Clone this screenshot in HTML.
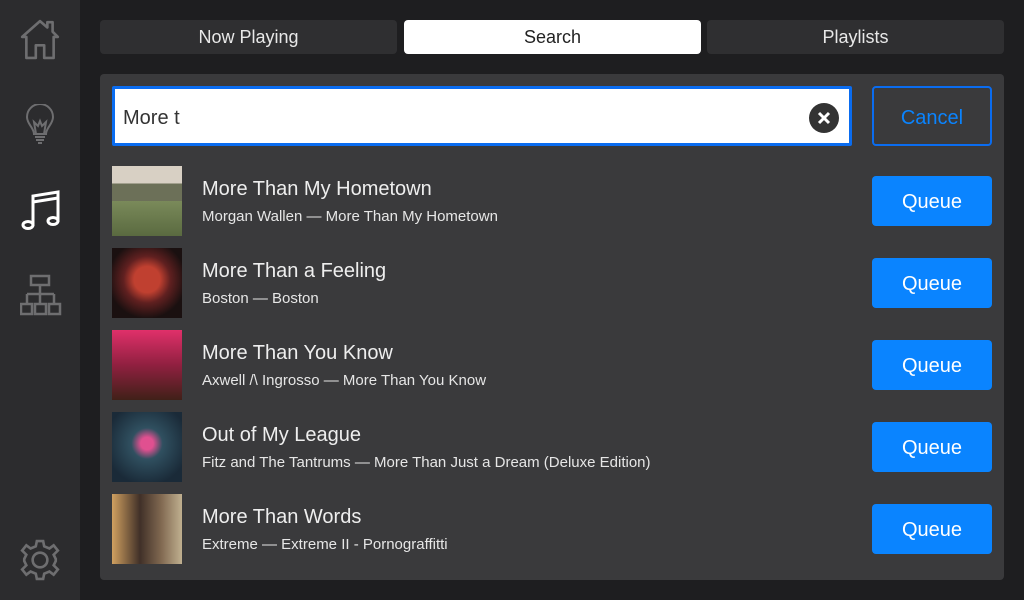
<!DOCTYPE html>
<html><head><meta charset="utf-8"><style>
*{margin:0;padding:0;box-sizing:border-box}
body{width:1024px;height:600px;background:#1e1e20;font-family:"Liberation Sans",sans-serif;position:relative;overflow:hidden;color:#fff}
.side{position:absolute;left:0;top:0;width:80px;height:600px;background:#2c2c2e}
.side svg{position:absolute;left:20px}
.tab{position:absolute;top:20px;height:34px;width:297px;background:#2f2f31;border-radius:4px;text-align:center;line-height:34px;font-size:18px;color:#e8e8e8}
.panel{position:absolute;left:100px;top:74px;width:904px;height:506px;background:#3a3a3c;border-radius:4px}
.search{position:absolute;left:112px;top:86px;width:740px;height:60px;background:#fff;border:3px solid #0a6cf0;border-radius:2px}
.search span{position:absolute;left:8px;top:18px;font-size:20px;color:#333}
.clear{position:absolute;right:10px;top:14px;width:30px;height:30px;border-radius:50%;background:#333}
.cancel{position:absolute;left:872px;top:86px;width:120px;height:60px;border:2px solid #0a6cf0;border-radius:4px;color:#0a84ff;font-size:20px;text-align:center;line-height:60px}
.row{position:absolute;left:112px;width:880px;height:70px}
.thumb{position:absolute;left:0;top:0;width:70px;height:70px}
.t1{position:absolute;left:90px;top:12px;font-size:20px;color:#eee}
.t2{position:absolute;left:90px;top:42px;font-size:15px;color:#e6e6e6}
.q{position:absolute;left:760px;top:10px;width:120px;height:50px;background:#0a84ff;border-radius:4px;font-size:20px;text-align:center;line-height:52px;color:#fff}
</style></head><body>
<div class="side">
<svg style="top:18px;left:19px" width="42" height="42" viewBox="0 0 40 40" fill="none" stroke="#6e6e70" stroke-width="2.5" stroke-linejoin="round"><path d="M3 18 L20 3 L27 9 L27 4 L32 4 L32 13 L37 18 L33 18 L33 38 L24 38 L24 26 L16 26 L16 38 L7 38 L7 18 Z"/></svg>
<svg style="top:104px" width="40" height="42" viewBox="0 0 40 42" fill="none" stroke="#6e6e70" stroke-width="2"><path d="M14 30 C14 24 7 20 7 13 A13 13 0 0 1 33 13 C33 20 26 24 26 30 Z"/><path d="M16 30 L14 18 L18 22 L20 17 L22 22 L26 18 L24 30"/><path d="M15 33 H25 M16 36 H24 M18 39 H22"/></svg>
<svg style="top:188px" width="42" height="44" viewBox="0 0 42 44" fill="none" stroke="#fff" stroke-width="3"><path d="M13 38 V8 L38 4 V34"/><path d="M13 14 L38 10"/><ellipse cx="8" cy="37" rx="5" ry="3.5"/><ellipse cx="33" cy="33" rx="5" ry="3.5"/></svg>
<svg style="top:274px" width="42" height="42" viewBox="0 0 42 42" fill="none" stroke="#6e6e70" stroke-width="2.5"><rect x="11" y="2" width="18" height="9"/><path d="M20 11 V20 M7 20 H34 M7 20 V30 M20 20 V30 M34 20 V30"/><rect x="1" y="30" width="11" height="10"/><rect x="15" y="30" width="11" height="10"/><rect x="29" y="30" width="11" height="10"/></svg>
<svg style="top:539px;left:19px" width="42" height="42" viewBox="0 0 40 40" fill="none" stroke="#6e6e70" stroke-width="2.5"><path d="M17 2 H23 L24 7 L29 9 L33 6 L37 11 L33 15 L35 19 V21 L33 25 L37 29 L33 34 L29 31 L24 33 L23 38 H17 L16 33 L11 31 L7 34 L3 29 L7 25 L5 21 V19 L7 15 L3 11 L7 6 L11 9 L16 7 Z"/><circle cx="20" cy="20" r="7"/></svg>
</div>
<div class="tab" style="left:100px">Now Playing</div>
<div class="tab" style="left:404px;background:#fff;color:#222">Search</div>
<div class="tab" style="left:707px">Playlists</div>
<div class="panel"></div>
<div class="search"><span>More t</span><div class="clear"><svg width="30" height="30" viewBox="0 0 30 30" stroke="#fff" stroke-width="3"><path d="M10 10 L20 20 M20 10 L10 20"/></svg></div></div>
<div class="cancel">Cancel</div>

<div class="row" style="top:166px"><div class="thumb" style="background:linear-gradient(#d8d0c4 0 25%,#6c7058 25% 50%,#7a8a5a 50%,#5a6a40)"></div><div class="t1">More Than My Hometown</div><div class="t2">Morgan Wallen — More Than My Hometown</div><div class="q">Queue</div></div>
<div class="row" style="top:248px"><div class="thumb" style="background:radial-gradient(circle at 50% 45%,#c04030 0 25%,#602020 45%,#1a1010 75%)"></div><div class="t1">More Than a Feeling</div><div class="t2">Boston — Boston</div><div class="q">Queue</div></div>
<div class="row" style="top:330px"><div class="thumb" style="background:linear-gradient(#e0306a,#902040 50%,#402018)"></div><div class="t1">More Than You Know</div><div class="t2">Axwell /\ Ingrosso — More Than You Know</div><div class="q">Queue</div></div>
<div class="row" style="top:412px"><div class="thumb" style="background:radial-gradient(circle at 50% 45%,#e05090 0 12%,#305060 30%,#1a2a38 80%)"></div><div class="t1">Out of My League</div><div class="t2">Fitz and The Tantrums — More Than Just a Dream (Deluxe Edition)</div><div class="q">Queue</div></div>
<div class="row" style="top:494px"><div class="thumb" style="background:linear-gradient(90deg,#d0a060,#403028 40%,#806850 70%,#c0b090)"></div><div class="t1">More Than Words</div><div class="t2">Extreme — Extreme II - Pornograffitti</div><div class="q">Queue</div></div>
</body></html>
